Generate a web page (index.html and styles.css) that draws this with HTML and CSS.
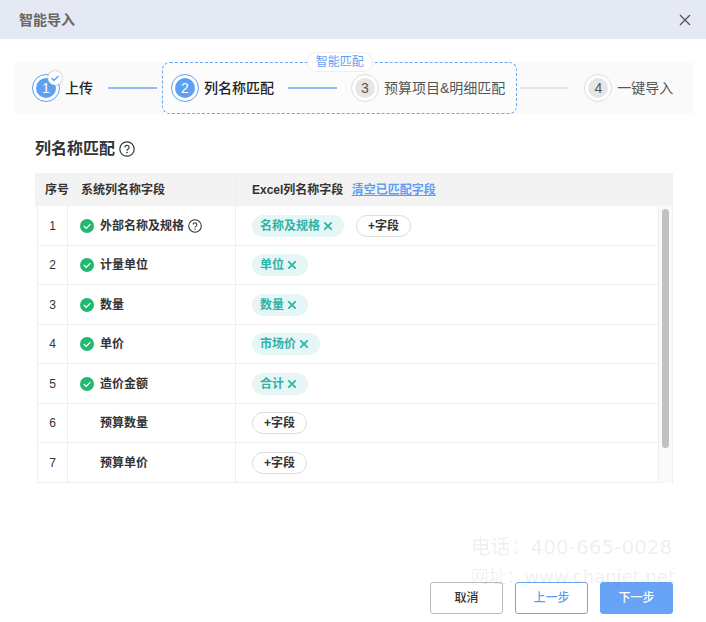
FILE: index.html
```
<!DOCTYPE html>
<html lang="zh-CN">
<head>
    <meta charset="UTF-8">
    <meta name="viewport" content="width=device-width, initial-scale=1.0">
    <title>智能导入</title>
    <link rel="stylesheet" href="styles.css">
</head>
<body>
    <svg class="symbols" aria-hidden="true">
        <symbol id="icon-check" viewBox="0 0 14 14">
            <circle cx="7" cy="7" r="7" fill="#22b870"/>
            <path d="M3.8 7l2.4 2.4 4.2-4.2" fill="none" stroke="#fff" stroke-width="1.2"/>
        </symbol>
        <symbol id="icon-help" viewBox="0 0 16 16">
            <circle cx="8" cy="8" r="7.2" fill="none" stroke="currentColor" stroke-width="1.2"/>
            <path d="M5.9 6.4a2.1 2.1 0 1 1 3.3 1.7c-.8.5-1.2.8-1.2 1.7" fill="none" stroke="currentColor" stroke-width="1.2"/>
            <circle cx="8" cy="11.6" r=".8" fill="currentColor"/>
        </symbol>
        <symbol id="icon-remove" viewBox="0 0 12 12">
            <path d="M2.3 2.3l7.4 7.4M9.7 2.3l-7.4 7.4" fill="none" stroke="currentColor" stroke-width="1.8"/>
        </symbol>
    </svg>

    <header class="dialog-header">
        <h1>智能导入</h1>
        <button class="close" type="button" aria-label="关闭">
            <svg width="12" height="12" viewBox="0 0 12 12"><path d="M1 1l10 10M11 1L1 11" fill="none" stroke="#555" stroke-width="1.3"/></svg>
        </button>
    </header>

    <main>
        <div class="steps">
            <div class="step active">
                <span class="circle"><span class="num">1</span>
                    <span class="done"><svg width="10" height="10" viewBox="0 0 10 10"><path d="M1.5 5l2.500 2.500 4.500-4.500" fill="none" stroke="#5d9ff2" stroke-width="1.4"/></svg></span>
                </span>
                <span>上传</span>
            </div>
            <span class="line"></span>
            <div class="smart-group">
                <span class="smart-label">智能匹配</span>
                <div class="step active">
                    <span class="circle"><span class="num">2</span></span>
                    <span>列名称匹配</span>
                </div>
                <span class="line"></span>
                <div class="step">
                    <span class="circle"><span class="num">3</span></span>
                    <span>预算项目&amp;明细匹配</span>
                </div>
            </div>
            <span class="line gray"></span>
            <div class="step">
                <span class="circle"><span class="num">4</span></span>
                <span>一键导入</span>
            </div>
        </div>

        <section class="match">
            <h2>列名称匹配 <svg width="16" height="16"><use href="#icon-help"/></svg></h2>

            <div class="table-head">
                <table>
                    <thead>
                        <tr>
                            <th class="col-no">序号</th>
                            <th class="col-name">系统列名称字段</th>
                            <th>Excel列名称字段 <a href="#">清空已匹配字段</a></th>
                        </tr>
                    </thead>
                </table>
            </div>
            <div class="table-body">
                <table>
                    <tbody>
                        <tr>
                            <td class="col-no">1</td>
                            <td class="col-name"><div class="field"><svg class="state"><use href="#icon-check"/></svg>外部名称及规格<svg class="help"><use href="#icon-help"/></svg></div></td>
                            <td><div class="tags"><button class="tag" type="button">名称及规格<svg><use href="#icon-remove"/></svg></button><button class="add" type="button">+字段</button></div></td>
                        </tr>
                        <tr>
                            <td class="col-no">2</td>
                            <td class="col-name"><div class="field"><svg class="state"><use href="#icon-check"/></svg>计量单位</div></td>
                            <td><div class="tags"><button class="tag" type="button">单位<svg><use href="#icon-remove"/></svg></button></div></td>
                        </tr>
                        <tr>
                            <td class="col-no">3</td>
                            <td class="col-name"><div class="field"><svg class="state"><use href="#icon-check"/></svg>数量</div></td>
                            <td><div class="tags"><button class="tag" type="button">数量<svg><use href="#icon-remove"/></svg></button></div></td>
                        </tr>
                        <tr>
                            <td class="col-no">4</td>
                            <td class="col-name"><div class="field"><svg class="state"><use href="#icon-check"/></svg>单价</div></td>
                            <td><div class="tags"><button class="tag" type="button">市场价<svg><use href="#icon-remove"/></svg></button></div></td>
                        </tr>
                        <tr>
                            <td class="col-no">5</td>
                            <td class="col-name"><div class="field"><svg class="state"><use href="#icon-check"/></svg>造价金额</div></td>
                            <td><div class="tags"><button class="tag" type="button">合计<svg><use href="#icon-remove"/></svg></button></div></td>
                        </tr>
                        <tr>
                            <td class="col-no">6</td>
                            <td class="col-name"><div class="field"><span class="state"></span>预算数量</div></td>
                            <td><div class="tags"><button class="add" type="button">+字段</button></div></td>
                        </tr>
                        <tr>
                            <td class="col-no">7</td>
                            <td class="col-name"><div class="field"><span class="state"></span>预算单价</div></td>
                            <td><div class="tags"><button class="add" type="button">+字段</button></div></td>
                        </tr>
                    </tbody>
                </table>
                <div class="scrollbar"><div class="thumb"></div></div>
            </div>
        </section>
    </main>

    <footer>
        <div class="watermark">
            <p class="phone">电话：400-665-0028</p>
            <p class="site">网址：www.chanjet.net</p>
        </div>
        <button class="btn" type="button">取消</button>
        <button class="btn outline" type="button">上一步</button>
        <button class="btn primary" type="button">下一步</button>
    </footer>
</body>
</html>
```
FILE: styles.css
```
* {
    box-sizing: border-box;
}
body {
    margin: 0;
    min-height: 100vh;
    display: flex;
    flex-direction: column;
    background: #fff;
    color: #333;
    font-family: "Liberation Sans", "Noto Sans CJK SC", sans-serif;
    font-size: 12px;
    line-height: 20px;
}
button {
    font: inherit;
    cursor: pointer;
}
svg {
    flex: none;
}
.symbols {
    display: none;
}

.dialog-header {
    display: flex;
    align-items: center;
    justify-content: space-between;
    height: 39px;
    padding: 0 15px 0 19px;
    background: #e5e9f4;
}
.dialog-header h1 {
    margin: 0;
    font-size: 14px;
    font-weight: 600;
    line-height: 18px;
    color: #666;
}
.close {
    display: flex;
    padding: 0;
    border: 0;
    background: none;
}

main {
    flex: 1;
    padding: 23px 13px 0 15px;
}

/* steps */
.steps {
    display: flex;
    align-items: center;
    height: 52px;
    padding-left: 17px;
    background: #fafafa;
    font-size: 14px;
    white-space: nowrap;
}
.step {
    display: flex;
    align-items: center;
    gap: 5px;
    color: #555;
}
.step.active {
    color: #222;
    font-weight: 500;
}
.circle {
    position: relative;
    display: flex;
    align-items: center;
    justify-content: center;
    width: 28px;
    height: 28px;
    border: 1px solid #ddd;
    border-radius: 50%;
    background: #fff;
}
.num {
    width: 20px;
    border-radius: 50%;
    background: #e6e6e6;
    text-align: center;
}
.active .circle {
    border-color: #5d9ff2;
}
.active .num {
    background: #5d9ff2;
    color: #fff;
}
.done {
    position: absolute;
    top: -4px;
    right: -3px;
    display: flex;
    align-items: center;
    justify-content: center;
    width: 14px;
    height: 14px;
    border-radius: 50%;
    background: #fff;
    box-shadow: 0 0 2px #999;
}
.line {
    width: 49px;
    height: 2px;
    margin: 0 5px 0 15px;
    background: #8fbcf5;
}
.line.gray {
    margin: 0 15px 0 3px;
    background: #e5e5e5;
}
.smart-group {
    position: relative;
    display: flex;
    align-items: center;
    height: 52px;
    padding: 0 11px 0 8px;
    border: 1px dashed #6aa6f4;
    border-radius: 8px;
    background: #fcfcfc;
}
.smart-group .line {
    margin: 0 14px;
}
.smart-label {
    position: absolute;
    top: -11px;
    left: 50%;
    transform: translateX(-50%);
    padding: 0 8px;
    border: 1px solid #eee;
    border-radius: 10px;
    background: #fff;
    color: #5d9ff2;
    font-size: 12px;
    line-height: 18px;
}

/* matching table */
.match {
    padding: 25px 20px 0;
}
.match h2 {
    display: flex;
    align-items: center;
    gap: 4px;
    margin: 0 0 14px;
    font-size: 16px;
    font-weight: 600;
}
table {
    width: 100%;
    border-collapse: separate;
    border-spacing: 0;
    table-layout: fixed;
}
th, td {
    padding: 0 0 0 16px;
    text-align: left;
    font-weight: 600;
}
.table-head {
    background: #f3f3f3;
}
th {
    height: 33px;
    white-space: nowrap;
}
th.col-no {
    width: 33px;
    padding-left: 10px;
}
th a {
    margin-left: 5px;
    color: #5d9ff2;
}
.col-name {
    width: 167px;
    padding-left: 12px;
    border-right: 1px solid #eee;
}
th.col-name {
    width: 168px;
    padding-left: 13px;
}
.table-body {
    display: flex;
    margin-left: 2px;
}
.table-body table {
    flex: 1;
    border-left: 1px solid #eee;
}
td {
    height: 39px;
    border-right: 1px solid #eee;
    border-bottom: 1px solid #eee;
}
tr:nth-child(odd) td {
    height: 40px;
}
td.col-no {
    width: 30px;
    padding: 0;
    text-align: center;
    font-weight: 400;
}
td.col-name {
    width: 168px;
}
.field, .tags {
    display: flex;
    align-items: center;
}
.state {
    width: 14px;
    height: 14px;
    margin-right: 6px;
}
.help {
    width: 14px;
    height: 14px;
    margin-left: 4px;
}
.tags {
    gap: 12px;
}
.tag, .add {
    display: flex;
    align-items: center;
    height: 22px;
    border-radius: 11px;
}
.tag {
    gap: 2px;
    padding: 0 10px 0 8px;
    border: 0;
    background: #e6f6f6;
    color: #2fb3a3;
}
.tag svg {
    width: 12px;
    height: 12px;
}
.add {
    padding: 0 11px;
    border: 1px solid #ddd;
    background: #fff;
    color: #333;
}
.scrollbar {
    width: 14px;
    padding: 3px 3px 0;
    border-right: 1px solid #eee;
    background: #fafafa;
}
.thumb {
    height: 239px;
    border-radius: 4px;
    background: #c1c1c1;
}

footer {
    position: relative;
    display: flex;
    justify-content: flex-end;
    gap: 12px;
    padding: 0 33px 8px 0;
}
.btn {
    width: 73px;
    height: 32px;
    padding: 0;
    border: 1px solid #bbb;
    border-radius: 3px;
    background: #fff;
    color: #333;
    font-weight: 500;
}
.btn.outline {
    border-color: #6aa6f4;
    color: #5d9ff2;
}
.btn.primary {
    border-color: #68a4f5;
    background: #68a4f5;
    color: #fff;
}
.watermark {
    position: absolute;
    right: 31px;
    bottom: 31px;
    color: rgba(0, 0, 0, 0.08);
    font-family: "DejaVu Sans", "Noto Sans CJK SC", sans-serif;
    line-height: 29px;
    white-space: nowrap;
    pointer-events: none;
}
.watermark p {
    margin: 0;
}
.phone {
    font-size: 20px;
}
.site {
    font-size: 18px;
}
```
